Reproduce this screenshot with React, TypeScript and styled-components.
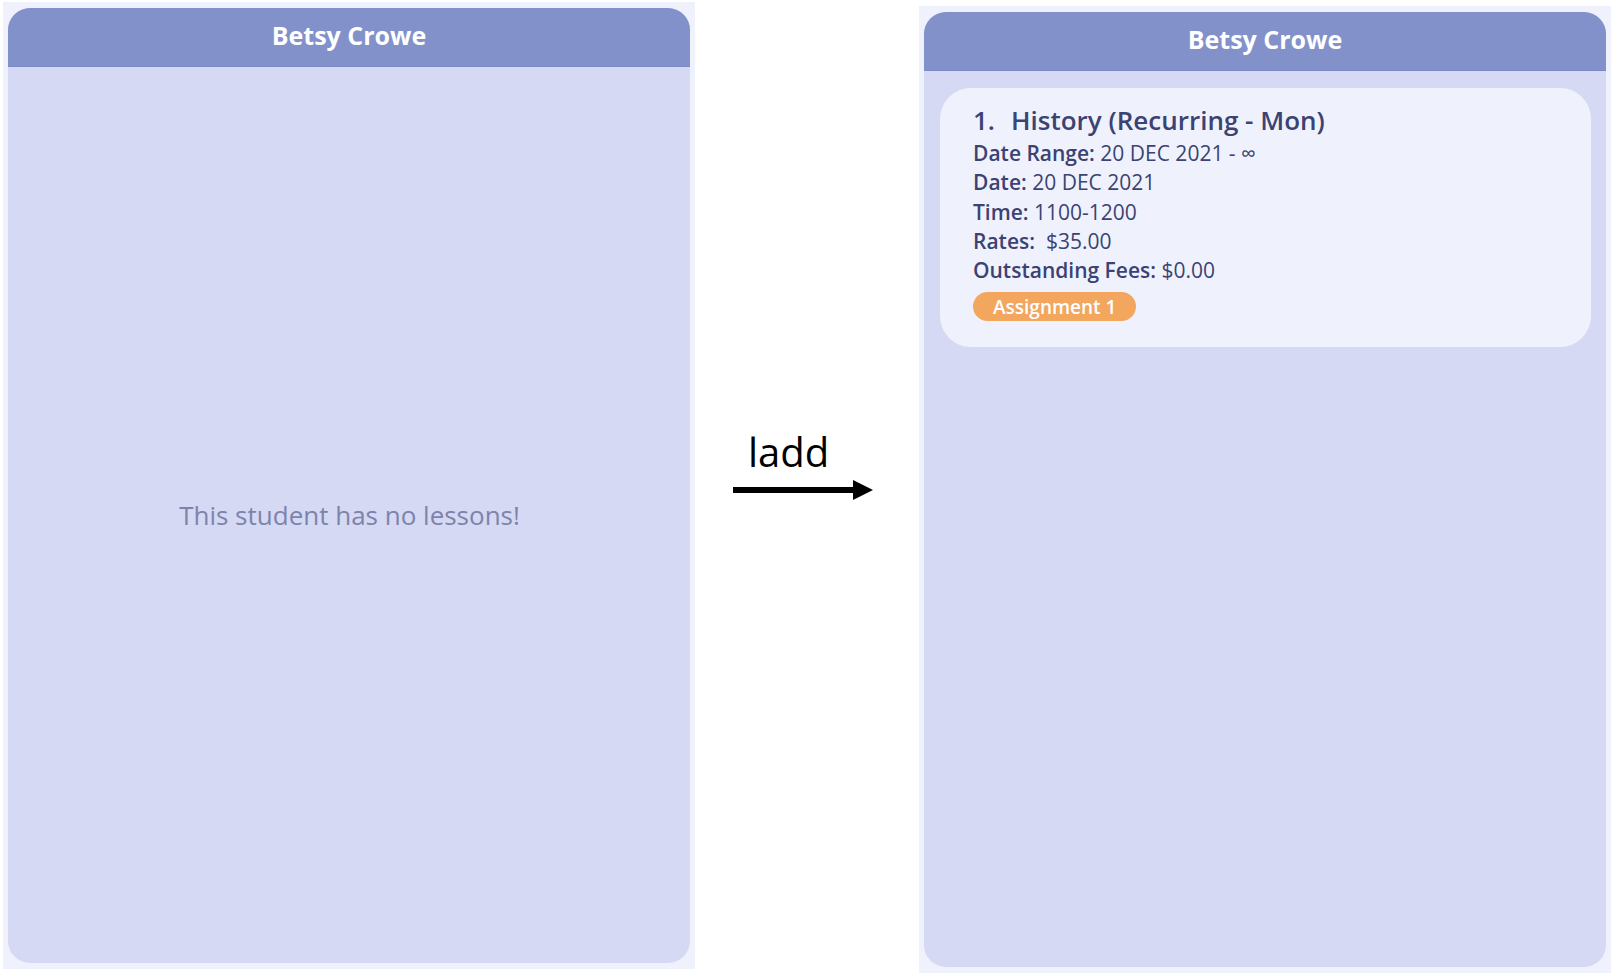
import React from "react";
import styled, { createGlobalStyle } from "styled-components";

const GlobalStyle = createGlobalStyle`
  html, body {
    margin: 0;
    padding: 0;
    background: #ffffff;
    font-family: "Open Sans", "Noto Sans", sans-serif;
  }
  * { box-sizing: border-box; }
`;

const Page = styled.div`
  display: flex;
  align-items: flex-start;
  width: 1618px;
  height: 976px;
`;

const Frame = styled.div<{ $top: number; $left: number }>`
  margin-top: ${(p) => p.$top}px;
  margin-left: ${(p) => p.$left}px;
  width: 692px;
  height: 967px;
  background: #eff2fd;
  padding: 6px 5px;
  display: flex;
`;

const Panel = styled.div`
  flex: 1;
  display: flex;
  flex-direction: column;
  background: #d5d9f3;
  border-radius: 22px;
  overflow: hidden;
`;

const Header = styled.div`
  height: 59px;
  flex: none;
  background: #8391cb;
  border-bottom: 1px solid #7b89c5;
  display: flex;
  align-items: center;
  justify-content: center;
  color: #ffffff;
  font-weight: 700;
  font-size: 25px;
  padding-bottom: 4px;
`;

const Body = styled.div<{ $center?: boolean }>`
  flex: 1;
  display: flex;
  flex-direction: column;
  padding: 17px 15px 17px 16px;
  ${(p) => (p.$center ? "align-items: center; justify-content: center;" : "")}
`;

const EmptyText = styled.div`
  color: #7d84ab;
  font-size: 26px;
`;

const Middle = styled.div`
  width: 224px;
  flex: none;
  display: flex;
  flex-direction: column;
  padding-top: 425px;
`;

const Command = styled.div`
  margin-left: 53px;
  font-size: 40px;
  color: #000000;
  line-height: 54px;
`;

const Arrow = styled.svg`
  margin-left: 38px;
  margin-top: 0px;
  display: block;
`;

const Card = styled.div`
  background: #eff2fd;
  border-radius: 31px;
  padding: 14px 33px 26px 33px;
  display: flex;
  flex-direction: column;
  align-items: flex-start;
  color: #3c4272;
`;

const Title = styled.div`
  font-size: 26px;
  font-weight: 600;
  display: flex;
  gap: 16px;
  margin-bottom: 1px;
`;

const Line = styled.div`
  font-size: 21px;
  line-height: 29.3px;
`;

const Label = styled.span`
  font-weight: 600;
`;

const Value = styled.span`
  white-space: pre;
`;

const Tag = styled.div`
  margin-top: 7px;
  height: 29px;
  padding: 0 20px;
  border-radius: 15px;
  background: #f2a65e;
  color: #ffffff;
  font-weight: 600;
  font-size: 19px;
  display: flex;
  align-items: center;
`;

const details: [string, string][] = [
  ["Date Range:", " 20 DEC 2021 - ∞"],
  ["Date:", " 20 DEC 2021"],
  ["Time:", " 1100-1200"],
  ["Rates:", "  $35.00"],
  ["Outstanding Fees:", " $0.00"],
];

export default function App() {
  return (
    <>
      <GlobalStyle />
      <Page>
        <Frame $top={2} $left={3}>
          <Panel>
            <Header>Betsy Crowe</Header>
            <Body $center>
              <EmptyText>This student has no lessons!</EmptyText>
            </Body>
          </Panel>
        </Frame>
        <Middle>
          <Command>ladd</Command>
          <Arrow width="140" height="22" viewBox="0 0 140 22">
            <rect x="0" y="8" width="124" height="6" fill="#000" />
            <polygon points="120,1 140,11 120,21" fill="#000" />
          </Arrow>
        </Middle>
        <Frame $top={6} $left={0}>
          <Panel>
            <Header>Betsy Crowe</Header>
            <Body>
              <Card>
                <Title>
                  <span>1.</span>
                  <span>History (Recurring - Mon)</span>
                </Title>
                {details.map(([k, v]) => (
                  <Line key={k}>
                    <Label>{k}</Label>
                    <Value>{v}</Value>
                  </Line>
                ))}
                <Tag>Assignment 1</Tag>
              </Card>
            </Body>
          </Panel>
        </Frame>
      </Page>
    </>
  );
}
